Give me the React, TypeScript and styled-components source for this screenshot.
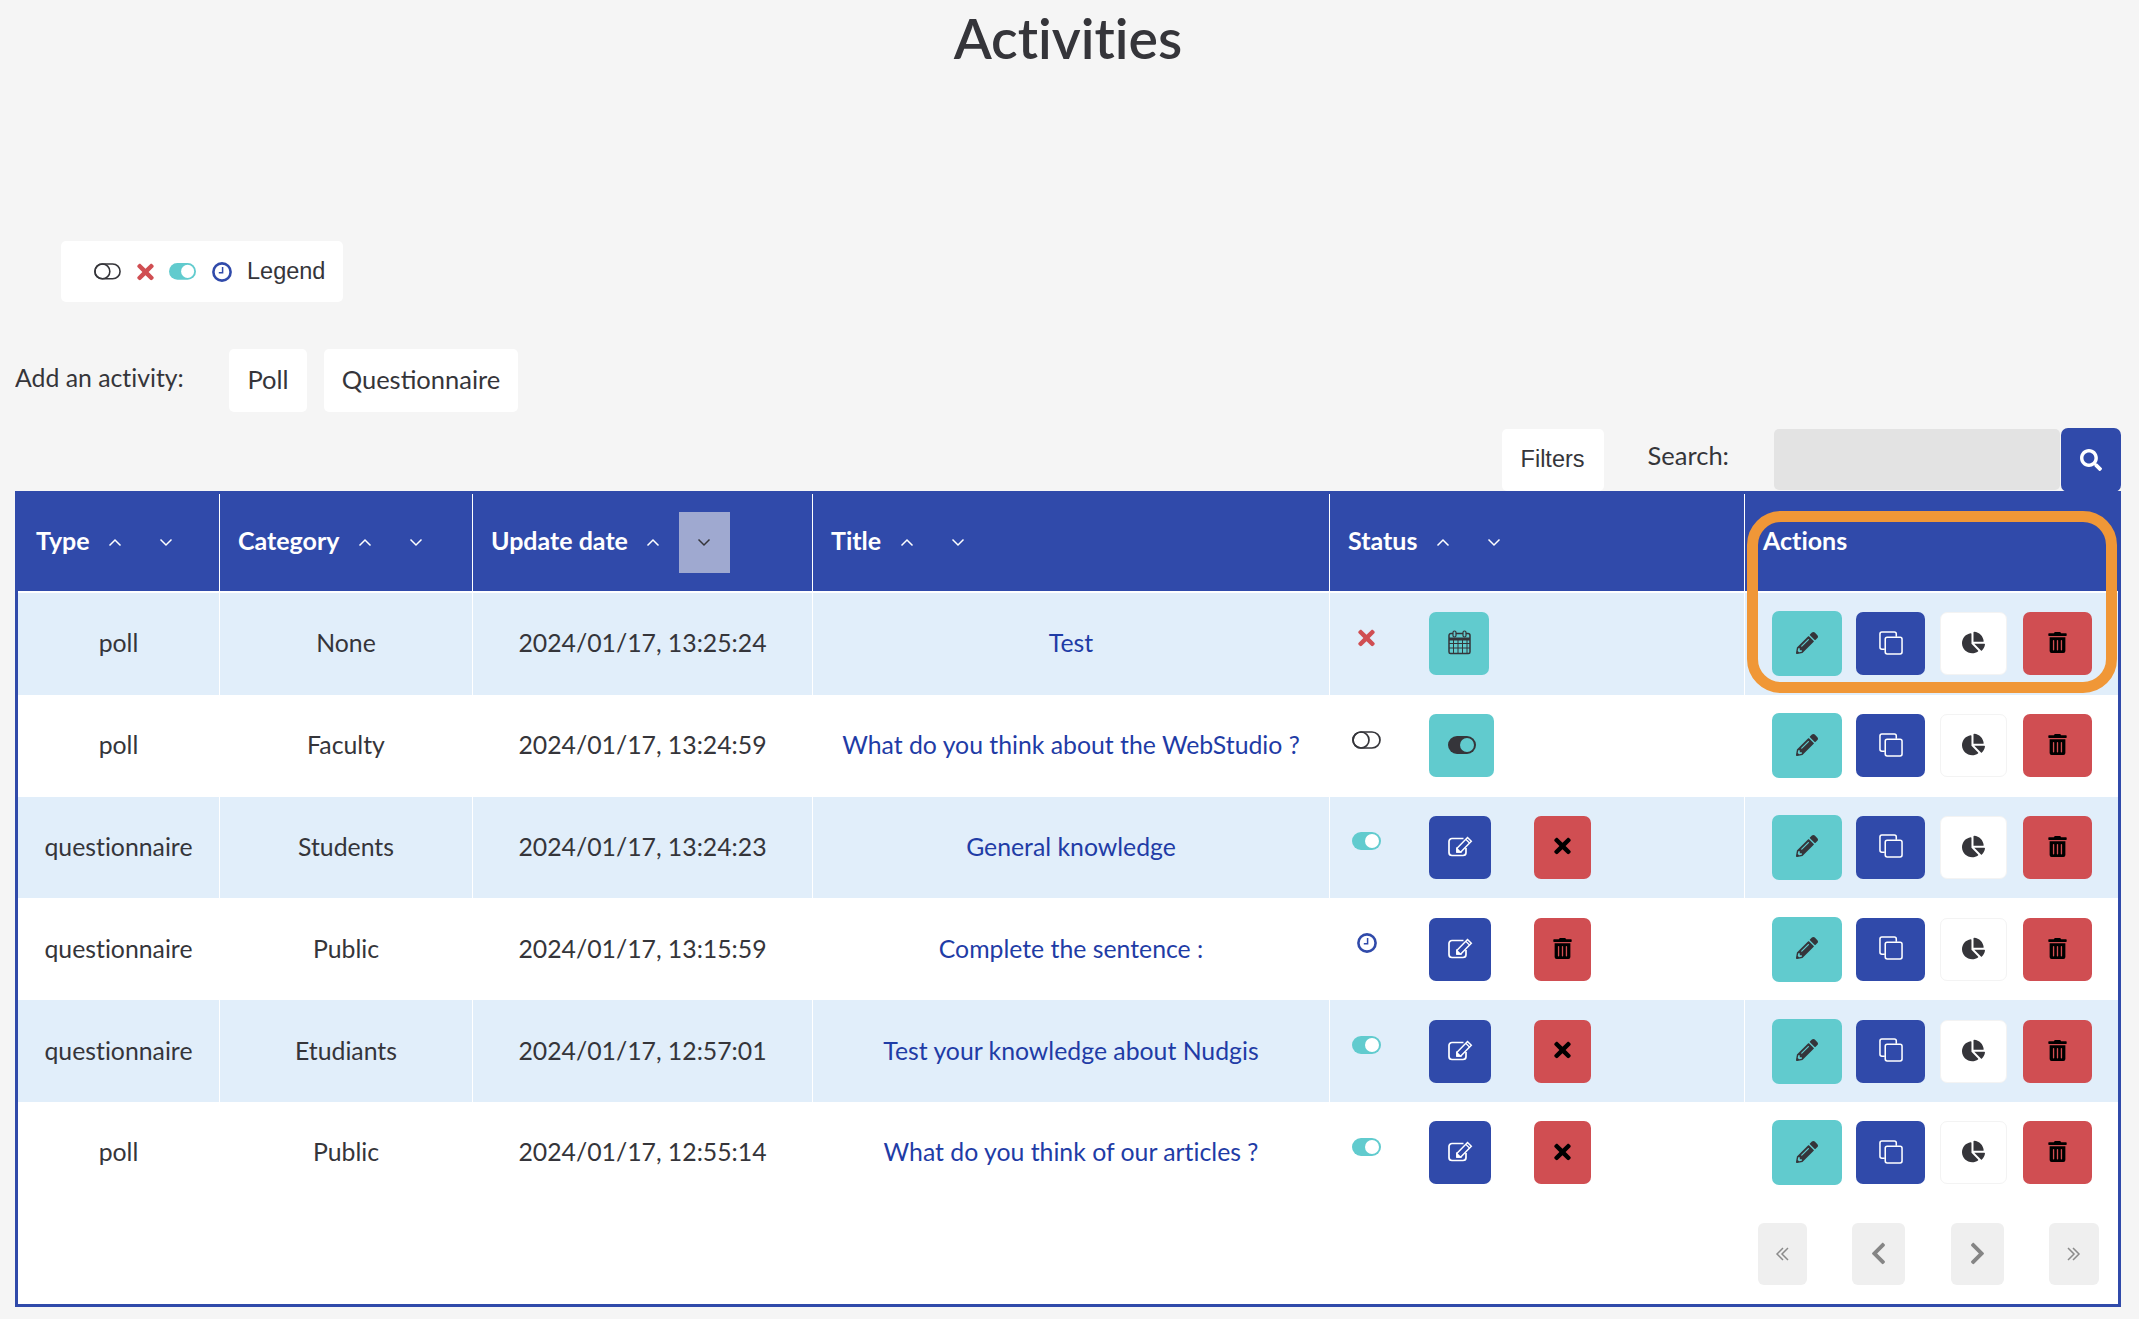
import React from 'react';
import styled, { createGlobalStyle } from 'styled-components';
import {
  FaChartPie,
  FaChevronLeft,
  FaChevronRight,
  FaPencilAlt,
  FaSearch,
  FaTimes,
  FaTrashAlt,
} from 'react-icons/fa';

const BLUE = '#304aaa';
const TEAL = '#61cbce';
const RED = '#d04e52';
const DARK = '#35353a';
const COLUMNS = '202px 253px 340px 517px 415px 373px';

const GlobalStyle = createGlobalStyle`
  html, body {
    margin: 0;
    background: #f5f5f5;
  }
  body {
    font-family: Lato, "Liberation Sans", sans-serif;
    font-variant-ligatures: none;
    color: ${DARK};
  }
`;

const ToggleOffIcon = ({ width = 29 }: { width?: number }) => (
  <svg width={width} height={(width * 18) / 29} viewBox="0 0 29 18" fill="none" stroke={DARK} strokeWidth="1.700">
    <rect x="1" y="1" width="27" height="16" rx="8" />
    <circle cx="9" cy="9" r="8" />
  </svg>
);

const ToggleOnIcon = ({ width = 29 }: { width?: number }) => (
  <svg width={width} height={(width * 18) / 29} viewBox="0 0 29 18">
    <rect x="0" y="0" width="29" height="18" rx="9" fill={TEAL} />
    <circle cx="20" cy="9" r="7" fill="#fff" />
  </svg>
);

const ToggleButtonIcon = () => (
  <svg width="28" height="18" viewBox="0 0 28 18">
    <rect x="0" y="0" width="28" height="18" rx="9" fill={DARK} />
    <circle cx="19" cy="9" r="7" fill={TEAL} />
  </svg>
);

const ClockIcon = () => (
  <svg width="20" height="20" viewBox="0 0 20 20" fill="none" stroke={BLUE}>
    <circle cx="10" cy="10" r="8.600" strokeWidth="2.600" />
    <path d="M10.600 5v5.800H6.800" strokeWidth="1.500" />
  </svg>
);

const CalendarIcon = () => (
  <svg width="23" height="25" viewBox="0 0 23 25" fill="none" stroke={DARK}>
    <path d="M3 3.500h17a2 2 0 0 1 2 2V22a1.500 1.500 0 0 1-1.500 1.500h-18A1.500 1.500 0 0 1 1 22V5.500a2 2 0 0 1 2-2z" strokeWidth="1.500" />
    <path d="M1 9h21" strokeWidth="3" />
    <path d="M1 13.500h21M1 18h21M5.500 9v14M10 9v14M14.500 9v14M19 9v14" strokeWidth="1" />
    <rect x="5" y="1" width="3" height="6" rx="1.500" fill={TEAL} strokeWidth="1.200" />
    <rect x="15" y="1" width="3" height="6" rx="1.500" fill={TEAL} strokeWidth="1.200" />
  </svg>
);

const CopyIcon = () => (
  <svg width="24" height="24" viewBox="0 0 25 25" fill="none" stroke="#fff" strokeWidth="1.600">
    <path d="M6 19H3a2 2 0 0 1-2-2V3a2 2 0 0 1 2-2h13a2 2 0 0 1 2 2v3" />
    <rect x="6.500" y="6.500" width="17.500" height="17.500" rx="2" />
  </svg>
);

const EditIcon = () => (
  <svg width="25" height="21" viewBox="0 0 25 21" fill="none" stroke="#fff" strokeWidth="1.700">
    <path d="M15.500 2.500H4a3 3 0 0 0-3 3v11a3 3 0 0 0 3 3h11a3 3 0 0 0 3-3v-4.500" />
    <path d="M9 16v-3.800L19.500 1.500l3.800 3.800L12.800 16z" strokeWidth="1.500" />
    <path d="M9 16v-3l3 3z" fill="#fff" />
    <path d="M18 3.500l3.500 3.500" strokeWidth="1.200" />
  </svg>
);

const SortIcon = ({ up, color = '#fff' }: { up?: boolean; color?: string }) => (
  <svg width="14" height="9" viewBox="0 0 14 9" fill="none" stroke={color} strokeWidth="1.500">
    <path d={up ? 'M1.500 7.500 7 2l5.500 5.500' : 'M1.500 1.500 7 7l5.500-5.500'} />
  </svg>
);

const DoubleAngleIcon = ({ right }: { right?: boolean }) => (
  <svg width="14" height="14" viewBox="0 0 14 14" fill="none" stroke="#8b8b8b" strokeWidth="1.500">
    <path d={right ? 'M1 1l6 6-6 6M6 1l6 6-6 6' : 'M13 1 7 7l6 6M8 1 2 7l6 6'} />
  </svg>
);

type Status = 'off' | 'cross' | 'on' | 'clock';

const rows: { type: string; category: string; date: string; title: string; status: Status }[] = [
  { type: 'poll', category: 'None', date: '2024/01/17, 13:25:24', title: 'Test', status: 'cross' },
  { type: 'poll', category: 'Faculty', date: '2024/01/17, 13:24:59', title: 'What do you think about the WebStudio ?', status: 'off' },
  { type: 'questionnaire', category: 'Students', date: '2024/01/17, 13:24:23', title: 'General knowledge', status: 'on' },
  { type: 'questionnaire', category: 'Public', date: '2024/01/17, 13:15:59', title: 'Complete the sentence :', status: 'clock' },
  { type: 'questionnaire', category: 'Etudiants', date: '2024/01/17, 12:57:01', title: 'Test your knowledge about Nudgis', status: 'on' },
  { type: 'poll', category: 'Public', date: '2024/01/17, 12:55:14', title: 'What do you think of our articles ?', status: 'on' },
];

const Cross = styled(FaTimes)`
  width: 17px;
  height: 24px;
  flex: none;
`;

const StatusIcon = ({ status }: { status: Status }) => {
  if (status === 'off') return <ToggleOffIcon />;
  if (status === 'on') return <ToggleOnIcon />;
  if (status === 'clock') return <ClockIcon />;
  return <Cross color={RED} />;
};

const StatusButtons = ({ status }: { status: Status }) => {
  if (status === 'cross') {
    return (
      <IconButton $bg={TEAL} $width={60} $height={63}>
        <CalendarIcon />
      </IconButton>
    );
  }
  if (status === 'off') {
    return (
      <IconButton $bg={TEAL} $width={65} $height={63}>
        <ToggleButtonIcon />
      </IconButton>
    );
  }
  return (
    <>
      <IconButton $bg={BLUE} $width={62} $height={63}>
        <EditIcon />
      </IconButton>
      <IconButton $bg={RED} $width={57} $height={63} $left={43}>
        {status === 'clock' ? <FaTrashAlt size={21} color="#000" /> : <Cross color="#000" />}
      </IconButton>
    </>
  );
};

const SortableHeader = ({ label, active }: { label: string; active?: boolean }) => (
  <HeaderCell>
    <HeaderLabel>{label}</HeaderLabel>
    <SortButton><SortIcon up /></SortButton>
    <SortButton $active={active}><SortIcon color={active ? DARK : '#fff'} /></SortButton>
  </HeaderCell>
);

const App = () => (
  <Page>
    <GlobalStyle />
    <Title>Activities</Title>
    <Legend>
      <ToggleOffIcon width={27} />
      <Cross color={RED} />
      <ToggleOnIcon width={27} />
      <ClockIcon />
      <LegendLabel>Legend</LegendLabel>
    </Legend>
    <AddRow>
      <AddLabel>Add an activity:</AddLabel>
      <AddButton $width={78}>Poll</AddButton>
      <AddButton $width={194}>Questionnaire</AddButton>
    </AddRow>
    <Toolbar>
      <FilterButton>Filters</FilterButton>
      <SearchLabel>Search:</SearchLabel>
      <SearchInput />
      <SearchButton aria-label="Search">
        <FaSearch size={22} color="#fff" />
      </SearchButton>
    </Toolbar>
    <TableFrame>
      <HeaderRow>
        <SortableHeader label="Type" />
        <SortableHeader label="Category" />
        <SortableHeader label="Update date" active />
        <SortableHeader label="Title" />
        <SortableHeader label="Status" />
        <HeaderCell $last><HeaderLabel>Actions</HeaderLabel></HeaderCell>
      </HeaderRow>
      {rows.map((row, index) => (
        <Row key={row.date} $striped={index % 2 === 0}>
          <Cell>{row.type}</Cell>
          <Cell>{row.category}</Cell>
          <Cell>{row.date}</Cell>
          <Cell><TitleLink>{row.title}</TitleLink></Cell>
          <StatusCell>
            <StatusSlot><StatusIcon status={row.status} /></StatusSlot>
            <StatusButtons status={row.status} />
          </StatusCell>
          <ActionsCell>
            <IconButton $bg={TEAL} $width={70} $height={65}>
              <FaPencilAlt size={22} color={DARK} />
            </IconButton>
            <IconButton $bg={BLUE} $width={69} $height={63} $left={14}>
              <CopyIcon />
            </IconButton>
            <IconButton $bg="#fff" $width={67} $height={63} $left={15} $outlined>
              <FaChartPie size={23} color={DARK} />
            </IconButton>
            <IconButton $bg={RED} $width={69} $height={63} $left={16}>
              <FaTrashAlt size={21} color="#000" />
            </IconButton>
          </ActionsCell>
        </Row>
      ))}
      <Pagination>
        <PageButton $width={49}><DoubleAngleIcon /></PageButton>
        <PageButton $width={53}><PageChevron as={FaChevronLeft} /></PageButton>
        <PageButton $width={53}><PageChevron as={FaChevronRight} /></PageButton>
        <PageButton $width={50}><DoubleAngleIcon right /></PageButton>
      </Pagination>
      <Highlight />
    </TableFrame>
  </Page>
);

const Page = styled.div`
  width: 2106px;
  height: 1319px;
  margin-left: 15px;
  overflow: hidden;
`;

const Title = styled.h1`
  margin: 0;
  height: 76px;
  line-height: 76px;
  text-align: center;
  font-size: 55.500px;
  font-weight: 600;
`;

const Legend = styled.div`
  display: inline-flex;
  align-items: center;
  gap: 15.500px;
  height: 61px;
  box-sizing: border-box;
  margin: 165px 0 0 46px;
  padding: 0 18px 0 33px;
  background: #fff;
  border-radius: 5px;
`;

const LegendLabel = styled.span`
  font-family: "Liberation Sans", sans-serif;
  font-size: 23.500px;
`;

const AddRow = styled.div`
  display: flex;
  align-items: center;
  gap: 17px;
  margin-top: 47px;
`;

const AddLabel = styled.span`
  width: 197px;
  margin-bottom: 7px;
  font-size: 24.800px;
`;

const AddButton = styled.button<{ $width: number }>`
  width: ${(props) => props.$width}px;
  height: 63px;
  padding: 0 0 3px;
  border: 0;
  border-radius: 5px;
  background: #fff;
  color: ${DARK};
  font-family: inherit;
  font-size: 25.500px;
`;

const Toolbar = styled.div`
  display: flex;
  align-items: center;
  justify-content: flex-end;
  height: 63px;
  margin-top: 16px;
`;

const FilterButton = styled.button`
  width: 102px;
  height: 62px;
  padding: 0;
  border: 0;
  border-radius: 5px;
  background: #fff;
  color: ${DARK};
  font-family: "Liberation Sans", sans-serif;
  font-size: 23.500px;
`;

const SearchLabel = styled.span`
  margin: 0 45px 9px 44px;
  font-size: 25.500px;
`;

const SearchInput = styled.div`
  width: 286px;
  height: 61px;
  margin-right: 1px;
  border-radius: 5px;
  background: #e3e3e3;
`;

const SearchButton = styled.button`
  display: flex;
  align-items: center;
  justify-content: center;
  width: 60px;
  height: 64px;
  padding: 0;
  border: 0;
  border-radius: 7px;
  background: ${BLUE};
`;

const TableFrame = styled.div`
  position: relative;
  height: 816px;
  box-sizing: border-box;
  border: 3px solid ${BLUE};
  background: #fff;
`;

const HeaderRow = styled.div`
  display: grid;
  grid-template-columns: ${COLUMNS};
  height: 97px;
  margin-bottom: 2px;
  background: ${BLUE};
`;

const HeaderCell = styled.div<{ $last?: boolean }>`
  display: flex;
  align-items: center;
  padding-left: 18px;
  border-right: ${(props) => (props.$last ? '0' : '1px solid #fff')};
  color: #fff;
  font-size: 25px;
  font-weight: 700;
`;

const HeaderLabel = styled.span`
  margin-bottom: 5px;
`;

const SortButton = styled.span<{ $active?: boolean }>`
  display: flex;
  align-items: center;
  justify-content: center;
  width: 51px;
  height: 61px;
  background: ${(props) => (props.$active ? '#9fa9d0' : 'transparent')};
`;

const Row = styled.div<{ $striped: boolean }>`
  display: grid;
  grid-template-columns: ${COLUMNS};
  height: 101.800px;
  background: ${(props) => (props.$striped ? '#e1eefa' : '#fff')};
`;

const Cell = styled.div`
  display: flex;
  align-items: center;
  justify-content: center;
  padding-bottom: 2px;
  border-right: 1px solid #fff;
  font-size: 24.800px;
`;

const TitleLink = styled.a`
  color: #1f3ca6;
`;

const StatusCell = styled.div`
  display: flex;
  align-items: center;
  padding-left: 22px;
  border-right: 1px solid #fff;
`;

const StatusSlot = styled.span`
  display: flex;
  justify-content: center;
  width: 29px;
  margin: 0 48px 12px 0;
`;

const ActionsCell = styled.div`
  display: flex;
  align-items: center;
  padding-left: 27px;
`;

const IconButton = styled.button<{
  $bg: string;
  $width: number;
  $height: number;
  $left?: number;
  $outlined?: boolean;
}>`
  display: flex;
  align-items: center;
  justify-content: center;
  flex: none;
  width: ${(props) => props.$width}px;
  height: ${(props) => props.$height}px;
  margin-left: ${(props) => props.$left || 0}px;
  padding: 0 0 2px;
  border: ${(props) => (props.$outlined ? '1px solid #f3f3f3' : '0')};
  border-radius: 7px;
  background: ${(props) => props.$bg};
`;

const Pagination = styled.div`
  display: flex;
  justify-content: flex-end;
  gap: 45.500px;
  padding: 19px 19px 0 0;
`;

const PageButton = styled.span<{ $width: number }>`
  display: flex;
  align-items: center;
  justify-content: center;
  width: ${(props) => props.$width}px;
  height: 62px;
  border-radius: 6px;
  background: #efefef;
`;

const PageChevron = styled.svg`
  width: 25px;
  height: 25px;
  color: #858585;
`;

const Highlight = styled.div`
  position: absolute;
  left: 1729px;
  top: 17px;
  width: 370px;
  height: 182px;
  box-sizing: border-box;
  border: 11px solid #f09737;
  border-radius: 34px;
  pointer-events: none;
`;

export default App;
